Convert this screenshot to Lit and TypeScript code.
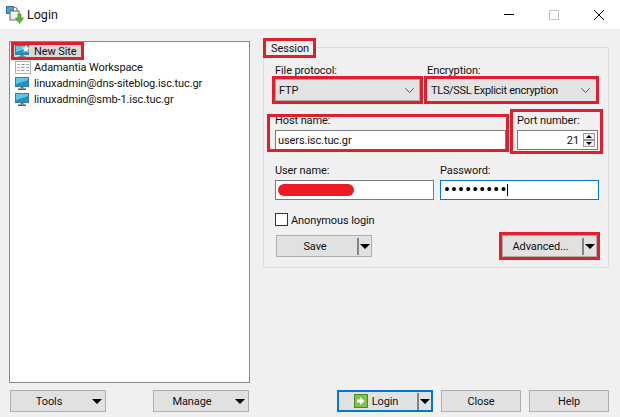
import { LitElement, css, html, svg } from 'lit'
import { customElement } from 'lit/decorators.js'

const monitor = (star = false) => html`
	<svg class="icon" width="16" height="16" viewBox="0 0 16 16">
		<rect x="0.5" y="2.5" width="13" height="9" fill="#1f93c4" stroke="#3b7d99"></rect>
		<path d="M1 3h12v2L1 9z" fill="#62c6e6"></path>
		<rect x="5.500" y="12" width="3" height="1.500" fill="#6d7b82"></rect>
		<rect x="3" y="13.500" width="8" height="1.500" fill="#4a585f"></rect>
		${star ? svg`<path transform="translate(-1 2)" d="M12 0l1.100 2.400 2.600.3-1.900 1.800.5 2.600L12 5.800 9.700 7.100l.5-2.600-1.900-1.800 2.600-.3z" fill="#fff" stroke="#c9c9c9" stroke-width=".5"></path>` : ''}
	</svg>`

const workspace = html`
	<svg class="icon" width="16" height="16" viewBox="0 0 16 16">
		<rect x="0.5" y="2.5" width="15" height="12" fill="#fff" stroke="#b0b0b0"></rect>
		<path d="M2 5h3v1H2zM2 8h3v1H2zM2 11h3v1H2z" fill="#d8b26a"></path>
		<path d="M6.500 5h3v1h-3zM6.500 8h3v1h-3zM6.500 11h3v1h-3z" fill="#8c8c8c"></path>
		<path d="M11 5h3v1h-3zM11 8h3v1h-3zM11 11h3v1h-3z" fill="#8fa9c4"></path>
	</svg>`

const caret = html`<svg class="caret" width="10" height="5" viewBox="0 0 10 5"><path d="M0 0h10L5 5z" fill="#000"></path></svg>`
const chevron = html`<svg class="chevron" width="9" height="5" viewBox="0 0 9 5"><path d="M.3.300 4.500 4.500 8.700.3" fill="none" stroke="#555"></path></svg>`

@customElement('app-root')
export class AppRoot extends LitElement {
	render() {
		return html`
		<div class="titlebar">
			<svg width="18" height="18" viewBox="0 0 18 18">
				<rect x="0.500" y="0.500" width="7" height="7" fill="#4aa3d8" stroke="#2f6f9f"></rect>
				<rect x="4" y="5" width="9" height="9" fill="#eee" stroke="#666"></rect>
				<path d="M7 5V3.500a2 2 0 0 1 4 0V5" fill="none" stroke="#777" stroke-width="1.200"></path>
				<path d="M12 8h3v4h2.500L13.500 17.500 9.500 12H12z" fill="#5fb53a" stroke="#3a8a22" stroke-width=".6"></path>
			</svg>
			<span class="title">Login</span>
			<div class="winctl">
				<svg width="10" height="1" viewBox="0 0 10 1"><rect width="10" height="1" fill="#000"></rect></svg>
				<svg width="10" height="10" viewBox="0 0 10 10"><rect x=".5" y=".5" width="9" height="9" fill="none" stroke="#c4c4c4"></rect></svg>
				<svg width="10" height="10" viewBox="0 0 10 10"><path d="M0 0l10 10M10 0L0 10" stroke="#000"></path></svg>
			</div>
		</div>
		<div class="main">
			<div class="sites">
				<div class="site selected mark">${monitor(true)}<span class="t">New Site</span></div>
				<div class="site">${workspace}<span class="t">Adamantia Workspace</span></div>
				<div class="site">${monitor()}<span class="t">linuxadmin@dns-siteblog.isc.tuc.gr</span></div>
				<div class="site">${monitor()}<span class="t">linuxadmin@smb-1.isc.tuc.gr</span></div>
			</div>
			<div class="session">
				<div class="legend mark">Session</div>
				<div class="row top">
					<div class="field protocol">
						<div class="label">File protocol:</div>
						<div class="combo mark"><span class="t">FTP</span>${chevron}</div>
					</div>
					<div class="field encryption">
						<div class="label">Encryption:</div>
						<div class="combo mark"><span class="t">TLS/SSL Explicit encryption</span>${chevron}</div>
					</div>
				</div>
				<div class="row host">
					<div class="field hostname">
						<div class="label">Host name:</div>
						<div class="input"><span class="t">users.isc.tuc.gr</span></div>
					</div>
					<div class="field port">
						<div class="label">Port number:</div>
						<div class="input number"><span class="t">21</span>
							<div class="spin">
								<div class="spinbtn"><svg width="6" height="3" viewBox="0 0 6 3"><path d="M0 3L3 0l3 3z"></path></svg></div>
								<div class="spinbtn"><svg width="6" height="3" viewBox="0 0 6 3"><path d="M0 0l3 3 3-3z"></path></svg></div>
							</div>
						</div>
					</div>
				</div>
				<div class="row creds">
					<div class="field">
						<div class="label">User name:</div>
						<div class="input"><div class="redacted"></div></div>
					</div>
					<div class="field">
						<div class="label">Password:</div>
						<div class="input focused"><span class="dots">•••••••••</span><span class="cursor"></span></div>
					</div>
				</div>
				<label class="check"><span class="box"></span><span class="t">Anonymous login</span></label>
				<div class="row actions">
					<div class="btn split save"><span class="text"><span class="t">Save</span></span><span class="sep"></span>${caret}</div>
					<div class="btn split advanced mark"><span class="text"><span class="t">Advanced...</span></span><span class="sep"></span>${caret}</div>
				</div>
			</div>
		</div>
		<div class="footer">
			<div class="footleft">
				<div class="btn menu"><span class="text t">Tools</span>${caret}</div>
				<div class="btn menu"><span class="text t">Manage</span>${caret}</div>
			</div>
			<div class="footright">
				<div class="btn split login">
					<span class="text">
						<svg width="14" height="14" viewBox="0 0 14 14">
							<rect x=".5" y=".5" width="13" height="13" fill="#7cc644" stroke="#3f8f25"></rect>
							<path d="M3 5.500h3V3l4.500 4L6 11V8.500H3z" fill="#fff"></path>
						</svg>
						<span class="t">Login</span>
					</span><span class="sep"></span>${caret}
				</div>
				<div class="btn close"><span class="t">Close</span></div>
				<div class="btn help"><span class="t">Help</span></div>
			</div>
		</div>
	`
	}

	static styles = css`
	:host {
		display: block;
		width: 620px;
		height: 417px;
		overflow: hidden;
		background: #f0f0f0;
		color: #111;
		font-family: Roboto, "Noto Sans", sans-serif;
		font-size: 11px;
		letter-spacing: -0.1px;
		line-height: 16px;
	}

	/* Roboto sits a pixel higher than the reference font in a centred row */
	.t {
		padding-top: 2px;
	}

	.titlebar {
		display: flex;
		align-items: center;
		height: 29px;
		padding-left: 6px;
		gap: 3px;
		background: #fff;
		box-sizing: border-box;
	}

	.title {
		font-size: 12.500px;
		letter-spacing: 0;
	}

	.winctl {
		margin-left: auto;
		display: flex;
		align-items: center;
		gap: 35px;
		padding-right: 16px;
	}

	.main {
		display: flex;
		align-items: flex-start;
		gap: 13px;
		height: 354px;
		padding: 12px 0 0 9px;
		box-sizing: border-box;
	}

	.sites {
		width: 241px;
		height: 342px;
		box-sizing: border-box;
		padding: 1px 0 0 2px;
		background: #fff;
		border: 1px solid #828790;
	}

	.site {
		display: flex;
		align-items: center;
		gap: 3px;
		height: 16px;
		width: max-content;
		white-space: nowrap;
		padding: 0 6px 0 3px;
	}

	.site.selected {
		background: #d9d9d9;
		outline-offset: -2px;
	}

	.icon {
		flex: none;
	}

	.mark {
		outline: 3px solid #e01f2d;
	}

	.session {
		width: 346px;
		height: 221px;
		margin-top: 6px;
		box-sizing: border-box;
		border: 1px solid #dcdcdc;
		padding: 0 9px 0 11px;
	}

	.legend {
		width: 47px;
		box-sizing: border-box;
		margin: -7px 0 0 -9px;
		padding-left: 5px;
		height: 14px;
		line-height: 16px;
		background: #f0f0f0;
	}

	.row {
		display: flex;
	}

	.top {
		margin-top: 7px;
		gap: 7px;
	}

	.field {
		display: flex;
		flex-direction: column;
		flex: none;
	}

	.label {
		height: 16px;
		line-height: 18px;
		margin-bottom: 1px;
		white-space: nowrap;
	}

	.protocol {
		width: 145px;
	}

	.encryption {
		width: 169px;
	}

	.combo {
		display: flex;
		align-items: center;
		justify-content: space-between;
		height: 22px;
		box-sizing: border-box;
		padding: 0 5px 0 3px;
		background: #e3e3e3;
		border: 1px solid #adadad;
		white-space: nowrap;
	}

	.encryption .combo {
		border-color: #e3e3e3;
		letter-spacing: -0.3px;
	}

	.host {
		margin-top: 11px;
	}

	.hostname,
	.port {
		position: relative;
	}

	/* the red annotation boxes here are not the same shape as the fields */
	.hostname::after,
	.port::after {
		content: "";
		position: absolute;
		border: 3px solid #e01f2d;
		pointer-events: none;
	}

	.hostname::after {
		inset: 2px -3px -2px -8px;
	}

	.port::after {
		inset: -3px -5px -4px -7px;
	}

	.hostname {
		width: 231px;
	}

	.port {
		width: 81px;
		margin-left: 11px;
	}

	.host .label,
	.creds .label {
		margin-bottom: 2px;
	}

	.input {
		display: flex;
		align-items: center;
		height: 20px;
		box-sizing: border-box;
		padding: 0 2px;
		background: #fff;
		border: 1px solid #7a7a7a;
	}

	.number {
		justify-content: flex-end;
		padding-right: 2px;
		gap: 4px;
	}

	.spin {
		display: flex;
		flex-direction: column;
		gap: 0;
	}

	.spinbtn {
		display: flex;
		align-items: center;
		justify-content: center;
		width: 12px;
		height: 7px;
		box-sizing: border-box;
		background: #efefef;
		border: 1px solid #9a9a9a;
	}

	.creds {
		margin-top: 12px;
		gap: 6px;
	}

	.creds .field {
		width: 159px;
	}

	.redacted {
		width: 76px;
		height: 12px;
		border-radius: 6px;
		background: #ed1c24;
	}

	.focused {
		border-color: #0078d7;
		padding-left: 3px;
		gap: 0;
	}

	.dots {
		font-size: 16px;
		font-weight: 700;
		letter-spacing: 1.300px;
		color: #000;
	}

	.cursor {
		width: 1px;
		height: 12px;
		background: #000;
	}

	.check {
		display: flex;
		align-items: center;
		gap: 3px;
		height: 13px;
		margin-top: 13px;
	}

	.box {
		width: 13px;
		height: 13px;
		box-sizing: border-box;
		border: 1px solid #333;
		background: #fff;
	}

	.actions {
		justify-content: space-between;
		margin: 9px 2px 0 1px;
	}

	.btn {
		display: flex;
		align-items: center;
		justify-content: center;
		height: 22px;
		box-sizing: border-box;
		background: #e1e1e1;
		border: 1px solid #adadad;
		white-space: nowrap;
	}

	.split {
		width: 96px;
	}

	.split .text {
		flex: 1;
		display: flex;
		align-items: center;
		justify-content: center;
		gap: 4px;
		padding-right: 4px;
	}

	.sep {
		width: 2px;
		height: 17px;
		margin-right: 1px;
		background: #858585;
	}

	.caret {
		flex: none;
		margin-right: 1px;
	}

	.advanced {
		width: 95px;
	}

	.footer {
		display: flex;
		padding: 7px 11px 0 10px;
	}

	.footleft {
		display: flex;
		gap: 47px;
	}

	.menu {
		width: 96px;
	}

	.menu .text {
		flex: 1;
		text-align: center;
	}

	.menu .caret {
		margin: 0 3px 0 5px;
	}

	.footright {
		display: flex;
		margin-left: auto;
	}

	.login {
		border: 2px solid #0078d7;
	}

	.close,
	.help {
		width: 80px;
	}

	.close {
		margin: 0 8px;
	}
	`
}

declare global {
	interface HTMLElementTagNameMap {
		'app-root': AppRoot
	}
}
